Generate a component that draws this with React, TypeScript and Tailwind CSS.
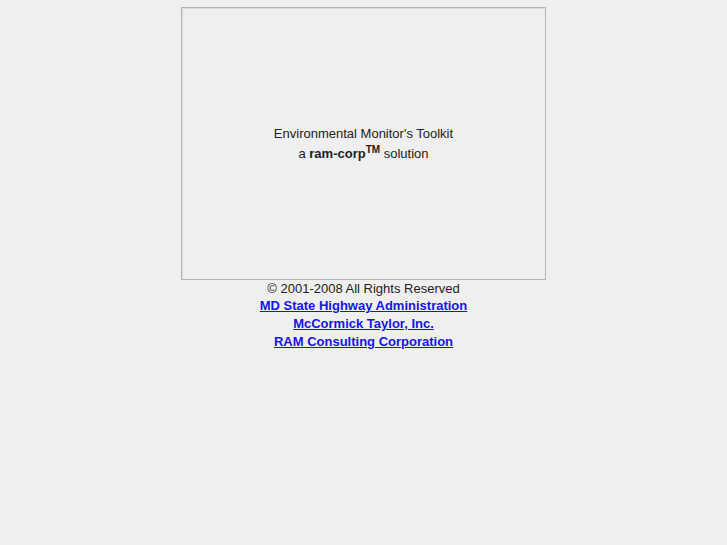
export default function App() {
  return (
    <div className="min-h-[545px] bg-[#efefef] pt-[7px] font-['Liberation_Sans',Arial,sans-serif] text-[13px] text-[#222222]">
      <div className="mx-auto flex h-[273px] w-[365px] flex-col items-center justify-center border border-[#b4b4b4] text-center leading-[20px] shadow-[inset_1px_1px_0_#dcdcdc]">
        <div>Environmental Monitor's Toolkit</div>
        <div>
          a <b>ram-corp<sup className="text-[10px]">TM</sup></b> solution
        </div>
      </div>
      <div className="text-center leading-[18px]">
        <div className="leading-[17px]">&copy; 2001-2008 All Rights Reserved</div>
        <div>
          <a href="#" className="font-bold text-[#1414e6] underline">MD State Highway Administration</a>
        </div>
        <div>
          <a href="#" className="font-bold text-[#1414e6] underline">McCormick Taylor, Inc.</a>
        </div>
        <div>
          <a href="#" className="font-bold text-[#1414e6] underline">RAM Consulting Corporation</a>
        </div>
      </div>
    </div>
  );
}
